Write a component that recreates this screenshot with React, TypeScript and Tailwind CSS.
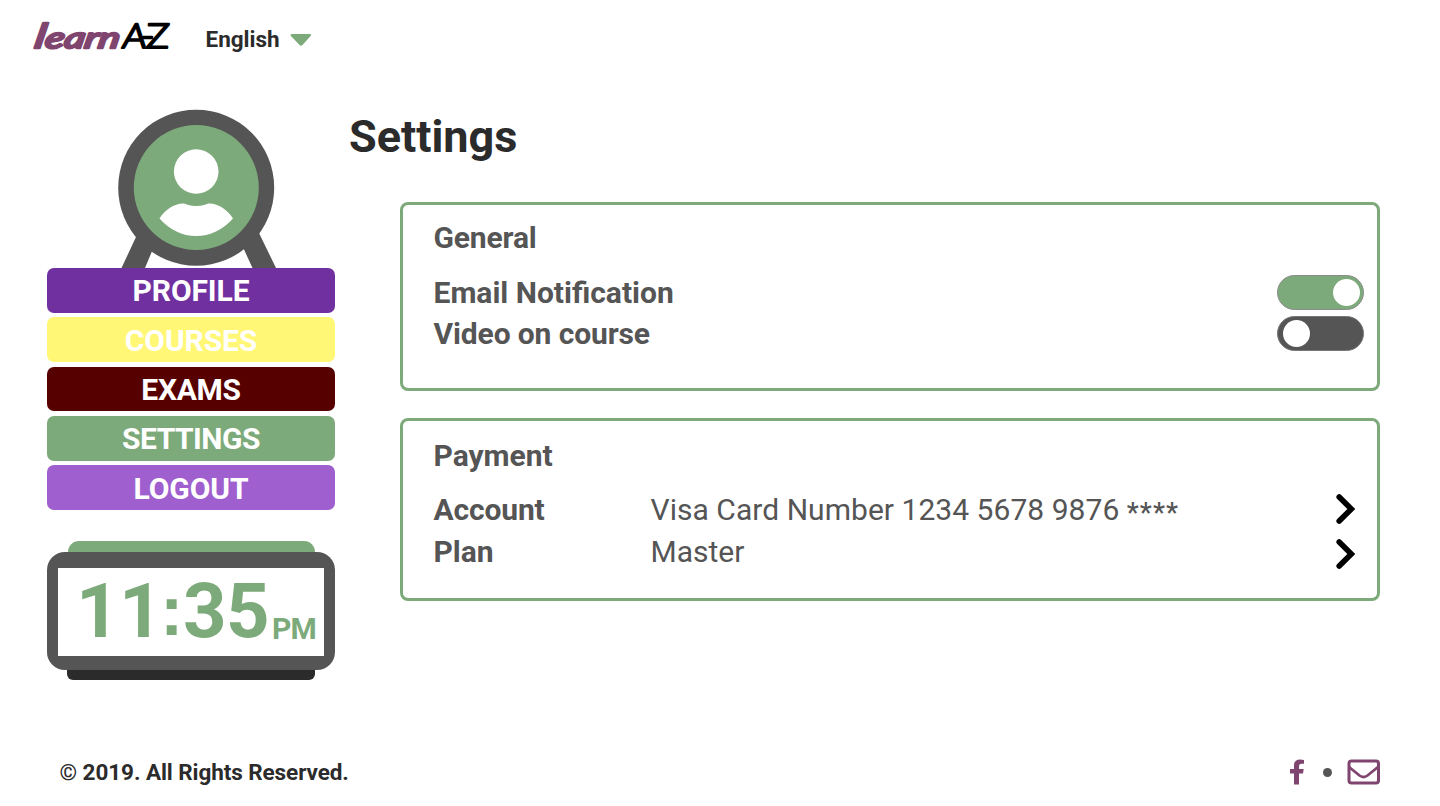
import React from "react";

const menu = [
  { label: "PROFILE", color: "bg-[#7030a0]", spacing: "tracking-[-0.1px]" },
  { label: "COURSES", color: "bg-[#fff775]", spacing: "tracking-[-0.1px]" },
  { label: "EXAMS", color: "bg-[#560000]", spacing: "tracking-[-0.3px]" },
  { label: "SETTINGS", color: "bg-[#7daa7a]", spacing: "tracking-[-0.5px]" },
  { label: "LOGOUT", color: "bg-[#9f5fcf]", spacing: "tracking-[-0.1px]" },
];

function Logo() {
  return (
    <svg width="146" height="44" viewBox="0 0 146 44" className="block overflow-visible">
      <text
        transform="translate(4.500 32.500) skewX(-10)"
        textLength="85"
        lengthAdjust="spacingAndGlyphs"
        fontFamily="Lato"
        fontStyle="italic"
        fontWeight="400"
        fill="#7f456f"
        stroke="#7f456f"
        strokeWidth="2.500"
        strokeLinecap="round"
        strokeLinejoin="round"
      >
        <tspan fontSize="34">l</tspan>
        <tspan fontSize="29">earn</tspan>
      </text>
      <g
        fontFamily="Lato"
        fontWeight="300"
        fontSize="34"
        fill="#000"
        stroke="#000"
        strokeWidth="2.200"
        strokeLinejoin="round"
      >
        <text transform="translate(92.500 33) skewX(-7)" textLength="24" lengthAdjust="spacingAndGlyphs">A</text>
        <text transform="translate(111.500 33)" textLength="14" lengthAdjust="spacingAndGlyphs">-</text>
        <text transform="translate(116.500 33) skewX(-4)" textLength="23" lengthAdjust="spacingAndGlyphs">Z</text>
      </g>
    </svg>
  );
}

function Avatar() {
  return (
    <svg width="160" height="159" viewBox="116 109 160 159" className="ml-[69px] block">
      <path d="M136 237L121.500 268H145L160 232ZM259 233L276 268H252.500L236 232Z" fill="#555" />
      <circle cx="196.200" cy="187.700" r="78" fill="#555" />
      <circle cx="196.300" cy="187.600" r="62.500" fill="#7daa7a" />
      <circle cx="196.200" cy="171.500" r="22.300" fill="#fff" />
      <path
        d="M159.500 218.500C165 209.500 174 203.800 183 203.500C185 203.500 186 204.200 187.500 204.700C193 206.400 199.500 206.400 205 204.700C206.500 204.200 207.500 203.500 209.500 203.500C218.500 203.800 227.500 209.500 233 218.500C223 230 210 236 196.200 236C182.500 236 169.500 230 159.500 218.500Z"
        fill="#fff"
      />
    </svg>
  );
}

function Clock() {
  return (
    <div className="mt-[31px] flex flex-col items-center">
      <div className="h-[11px] w-[247px] rounded-t-[20px] bg-[#7daa7a]" />
      <div className="flex h-[118px] w-[288px] rounded-[18px] bg-[#555] px-[11px] pt-4 pb-3.5">
        <div className="flex flex-1 bg-white pl-[18px] text-[#7daa7a]">
          <span className="flex w-[192px] text-[76px] leading-[86px] font-bold whitespace-nowrap">
            <span className="w-[84px] tracking-[-0.500px]">11</span>
            <span className="w-[23px] font-['Liberation_Sans',sans-serif] text-[70px]">:</span>
            <span className="tracking-[-0.500px]">35</span>
          </span>
          <span className="mt-[40.500px] ml-[4px] text-[30px] leading-10 font-bold tracking-[-0.800px]">PM</span>
        </div>
      </div>
      <div className="h-[10px] w-[248px] rounded-b-[6px] bg-[#2b2b2b]" />
    </div>
  );
}

function Toggle({ on }: { on: boolean }) {
  return (
    <button
      role="switch"
      aria-checked={on}
      className={
        on
          ? "flex h-[35px] w-[87px] items-center justify-end rounded-full border border-[#8b8b8b] bg-[#7daa7a] pr-[3px]"
          : "flex h-[35px] w-[87px] items-center justify-start rounded-full border border-[#777] bg-[#555] pl-[5px]"
      }
    >
      <span className="size-[27px] rounded-full bg-white" />
    </button>
  );
}

function Chevron() {
  return (
    <svg width="20" height="30" viewBox="0 0 20 30" className="block">
      <path d="M3.200 3L15.300 15L3.200 27" fill="none" stroke="#000" strokeWidth="5.600" strokeLinecap="round" strokeLinejoin="miter" />
    </svg>
  );
}

export default function App() {
  return (
    <div className="flex h-[806px] w-[1440px] flex-col overflow-hidden bg-white font-['Roboto',sans-serif] text-[#2b2b2b]">
      <header className="flex h-[109px] pt-[15px] pl-[29px]">
        <Logo />
        <button className="ml-[30.500px] flex h-12 items-center text-[22.500px] font-bold">
          <span className="mt-[2px] w-[74px] text-left">English</span>
          <svg width="22" height="14" viewBox="0 0 22 14" className="mt-[2px] ml-[10px]">
            <path d="M2 1H20Q22 1.200 20.300 3.200L12.500 12Q11 13.500 9.500 12L1.200 3.200Q-.5 1.200 2 1Z" fill="#7daa7a" />
          </svg>
        </button>
      </header>

      <div className="flex flex-1">
        <aside className="ml-[47px] w-[288px]">
          <Avatar />
          <nav className="flex flex-col gap-[4.400px]">
            {menu.map((m) => (
              <a
                key={m.label}
                className={`flex h-[44.900px] items-center justify-center rounded-[7px] pt-px text-[30px] font-bold text-white ${m.color} ${m.spacing}`}
              >
                {m.label}
              </a>
            ))}
          </nav>
          <Clock />
        </aside>

        <main className="ml-[14px] w-[1031px]">
          <h1 className="pt-px text-[45px] leading-[54px] font-bold">Settings</h1>
          <section className="mt-[38.400px] ml-[51px] flex h-[189.100px] justify-between rounded-[8px] border-[3px] border-[#7daa7a] pt-[12.600px] pr-[13px] pl-[30.500px] text-[30px] leading-10 text-[#555]">
            <div className="font-bold">
              <h2 className="tracking-[-0.150px]">General</h2>
              <p className="mt-[15px]">Email Notification</p>
              <p className="mt-px tracking-[-0.120px]">Video on course</p>
            </div>
            <div className="mt-[57px] flex flex-col gap-[6px]">
              <Toggle on={true} />
              <Toggle on={false} />
            </div>
          </section>
          <section className="mt-[26.500px] ml-[51px] flex h-[183.500px] rounded-[8px] border-[3px] border-[#7daa7a] pt-[15px] pr-[21px] pl-[30.500px] text-[30px] leading-10 text-[#555]">
            <div className="w-[217px] font-bold">
              <h2>Payment</h2>
              <p className="mt-[14px] tracking-[-0.150px]">Account</p>
              <p className="mt-[2px]">Plan</p>
            </div>
            <div className="flex-1 pt-[54px]">
              <p className="flex whitespace-pre tracking-[0.040px]">
                <span>Visa Card Number 1234 5678 9876 </span>
                <span className="pt-[6px] text-[27px] leading-[34px] font-medium tracking-[1.100px]">****</span>
              </p>
              <p className="mt-[2px]">Master</p>
            </div>
            <div className="flex flex-col gap-[15px] pt-[58px]">
              <Chevron />
              <Chevron />
            </div>
          </section>
        </main>
      </div>

      <footer className="flex h-[68px] items-center justify-between pr-[60px] pl-[59.500px]">
        <p className="pt-[2px] text-[22.500px] font-bold tracking-[-0.080px]">© 2019. All Rights Reserved.</p>
        <div className="flex items-center">
          <svg width="15" height="26" viewBox="0 0 15 26">
            <path
              d="M4 25.500V14.500H0V10H4V6.500Q4 .5 10 .5Q12 .5 14 .9V4.800H11.500Q9 4.800 9 7.200V10H13.700L13 14.500H9V25.500Z"
              fill="#7f456f"
            />
          </svg>
          <span className="ml-[18px] size-[9px] rounded-full bg-[#555]" />
          <svg width="33" height="26" viewBox="0 0 33 26" className="ml-[15px]">
            <rect x="2" y="2" width="29.500" height="22" rx="2.500" fill="none" stroke="#7f456f" strokeWidth="3" />
            <path d="M2 8L12.500 16.500Q16.500 19.500 20.500 16.500L31 8" fill="none" stroke="#7f456f" strokeWidth="2.800" />
          </svg>
        </div>
      </footer>
    </div>
  );
}
